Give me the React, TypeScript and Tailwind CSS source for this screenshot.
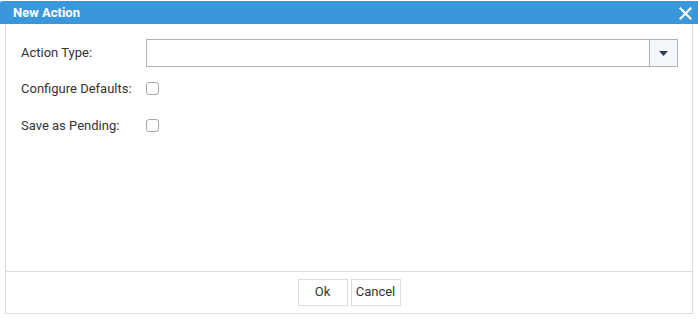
export default function App() {
  return (
    <div className="w-[698px] h-[319px] bg-white font-['Roboto',sans-serif] text-[13px] text-[#333]">
      {/* Title bar */}
      <div className="h-[23px] mt-px bg-[#3a97db] rounded-tl-[2px] flex items-center justify-between pl-[13px] pr-[6px]">
        <span className="text-white font-bold text-[13px]">New Action</span>
        <svg width="13" height="13" viewBox="0 0 13 13" className="mt-[1px]">
          <path d="M1.5 1.5 L11.5 11.5 M11.5 1.5 L1.5 11.5" stroke="#fff" strokeWidth="2.2" strokeLinecap="square" />
        </svg>
      </div>

      {/* Body */}
      <div className="mx-[5px] h-[290px] border border-t-0 border-[#dcdcdc] flex flex-col">
        <div className="flex-1 pl-[15px] pr-[14px] pt-[15px]">
          <div className="flex items-center h-[28px]">
            <label className="w-[125px]">Action Type:</label>
            <div className="flex-1 flex h-[28px] border border-[#b3b3b3]">
              <div className="flex-1 bg-white" />
              <button className="w-[28px] border-l border-[#b3b3b3] bg-[#f4f8fc] flex items-center justify-center">
                <svg width="9" height="5" viewBox="0 0 9 5">
                  <path d="M0 0 H9 L4.5 5 Z" fill="#2e3c5c" />
                </svg>
              </button>
            </div>
          </div>
          <div className="flex items-center h-[24px] mt-[9px]">
            <label className="w-[125px] pt-[2px]">Configure Defaults:</label>
            <span className="w-[13px] h-[13px] border border-[#a8a8a8] rounded-[3px] bg-white" />
          </div>
          <div className="flex items-center h-[24px] mt-[13px]">
            <label className="w-[125px] pt-[2px]">Save as Pending:</label>
            <span className="w-[13px] h-[13px] border border-[#a8a8a8] rounded-[3px] bg-white" />
          </div>
        </div>

        <div className="h-[42px] border-t border-[#dcdcdc] flex items-center justify-center gap-[3px] pb-[1px]">
          <button className="w-[50px] h-[27px] border border-[#dcdcdc] bg-white text-[13px] text-[#333]">Ok</button>
          <button className="w-[50px] h-[27px] border border-[#dcdcdc] bg-white text-[13px] text-[#333]">Cancel</button>
        </div>
      </div>
    </div>
  );
}
